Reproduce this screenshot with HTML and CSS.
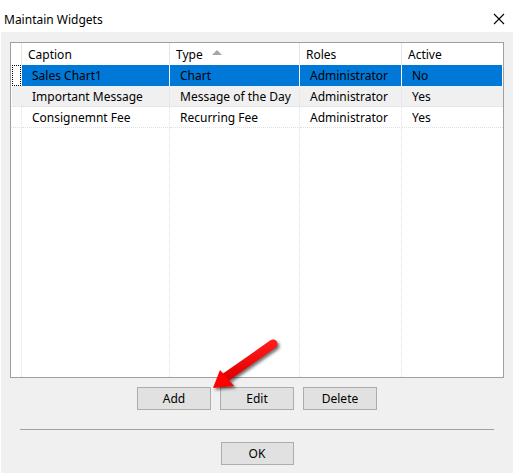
FILE: index.html
```html
<!DOCTYPE html>
<html>
<head>
    <meta charset="UTF-8">
    <title>Maintain Widgets</title>
    <link rel="stylesheet" href="styles.css">
</head>
<body>
    <div class="window">
        <div class="titlebar">
            <span class="title">Maintain Widgets</span>
            <svg class="close" width="12" height="12" viewBox="0 0 12 12">
                <path d="M1 1 L11 11 M11 1 L1 11" stroke="#000" stroke-width="1.1" fill="none"/>
            </svg>
        </div>

        <div class="client">
            <div class="grid">
                <div class="row header">
                    <div class="cell ind"></div>
                    <div class="cell">Caption</div>
                    <div class="cell">Type <span class="sort"></span></div>
                    <div class="cell">Roles</div>
                    <div class="cell">Active</div>
                </div>
                <div class="row selected">
                    <div class="cell ind"><span class="focus"></span></div>
                    <div class="cell">Sales Chart1</div>
                    <div class="cell">Chart</div>
                    <div class="cell">Administrator</div>
                    <div class="cell">No</div>
                </div>
                <div class="row alt">
                    <div class="cell ind"></div>
                    <div class="cell">Important Message</div>
                    <div class="cell">Message of the Day</div>
                    <div class="cell">Administrator</div>
                    <div class="cell">Yes</div>
                </div>
                <div class="row">
                    <div class="cell ind"></div>
                    <div class="cell">Consignemnt Fee</div>
                    <div class="cell">Recurring Fee</div>
                    <div class="cell">Administrator</div>
                    <div class="cell">Yes</div>
                </div>
                <div class="row filler">
                    <div class="cell ind"></div>
                    <div class="cell"></div>
                    <div class="cell"></div>
                    <div class="cell"></div>
                    <div class="cell"></div>
                </div>
            </div>

            <div class="buttons">
                <button>Add</button>
                <button>Edit</button>
                <button>Delete</button>
            </div>

            <div class="separator"></div>

            <div class="footer">
                <button class="ok">OK</button>
            </div>
        </div>

        <svg class="pointer" width="80" height="60" viewBox="205 335 80 60">
            <defs>
                <linearGradient id="red" x1="0" y1="0" x2="0" y2="1">
                    <stop offset="0" stop-color="#ff1a1a"/>
                    <stop offset="1" stop-color="#e00000"/>
                </linearGradient>
            </defs>
            <line x1="226" y1="377" x2="273" y2="344" stroke="url(#red)" stroke-width="9" stroke-linecap="round"/>
            <polygon points="213,388 220,370 234,386" fill="#f00"/>
        </svg>
    </div>
</body>
</html>
```

FILE: styles.css
```css
body {
    margin: 0;
    background: #fff;
    font-family: "Noto Sans", "Open Sans", sans-serif;
    font-size: 12px;
    color: #000;
}
.window {
    position: relative;
    width: 516px;
    height: 475px;
}
.titlebar {
    height: 32px;
    display: flex;
    align-items: center;
    justify-content: space-between;
    padding: 0 11px 0 4px;
}
.title {
    margin-top: 6px;
}
.close {
    margin-top: 5px;
}
.client {
    margin-left: 1px;
    width: 512px;
    height: 441px;
    background: #f0f0f0;
    padding-top: 10px;
    box-sizing: border-box;
}
.grid {
    margin-left: 9px;
    width: 494px;
    height: 336px;
    box-sizing: border-box;
    border: 1px solid #a0a0a0;
    background: #fff;
    display: flex;
    flex-direction: column;
}
.row {
    display: grid;
    grid-template-columns: 11px 148px 130px 102px 101px;
    height: 21px;
}
.cell {
    box-sizing: border-box;
    border-right: 1px dotted #e0e0e0;
    border-bottom: 1px dotted #e0e0e0;
    padding-left: 10px;
    line-height: 22px;
    white-space: nowrap;
    overflow: hidden;
}
.cell:last-child {
    border-right: none;
}
.cell.ind {
    padding: 0;
    position: relative;
}
.header {
    height: 22px;
}
.header .cell {
    border-right: 1px solid #e5e5e5;
    border-bottom: none;
    padding-left: 6px;
    line-height: 24px;
}
.header .cell:last-child {
    border-right: none;
}
.sort {
    display: inline-block;
    width: 0;
    height: 0;
    border-left: 5px solid transparent;
    border-right: 5px solid transparent;
    border-bottom: 5px solid #a6a6a6;
    margin-left: 6px;
    vertical-align: 4px;
}
.selected .cell {
    background: #0078d7;
    border-right: 1px solid #fff;
    border-bottom: none;
}
.selected .cell.ind {
    background: #fff;
    border-right: none;
}
.focus {
    position: absolute;
    left: 1px;
    top: 0;
    width: 9px;
    height: 21px;
    box-sizing: border-box;
    border: 1px dotted #000;
}
.alt .cell {
    background: #f0f0f0;
}
.alt .cell.ind {
    background: linear-gradient(to right, #fff 1px, #f0f0f0 1px);
}
.filler {
    flex: 1;
}
.filler .cell {
    border-bottom: none;
}
.buttons {
    display: flex;
    justify-content: center;
    gap: 9px;
    margin-top: 9px;
}
button {
    width: 74px;
    height: 23px;
    padding: 0;
    background: #e1e1e1;
    border: 1px solid #adadad;
    font-family: inherit;
    font-size: 12px;
    color: #000;
}
.separator {
    margin: 19px 19px 0;
    height: 1px;
    background: #a0a0a0;
}
.footer {
    display: flex;
    justify-content: center;
    margin-top: 12px;
}
.ok {
    width: 73px;
}
.pointer {
    position: absolute;
    left: 205px;
    top: 335px;
    filter: drop-shadow(2px 2px 1.5px rgba(0, 0, 0, 0.55));
}
```
